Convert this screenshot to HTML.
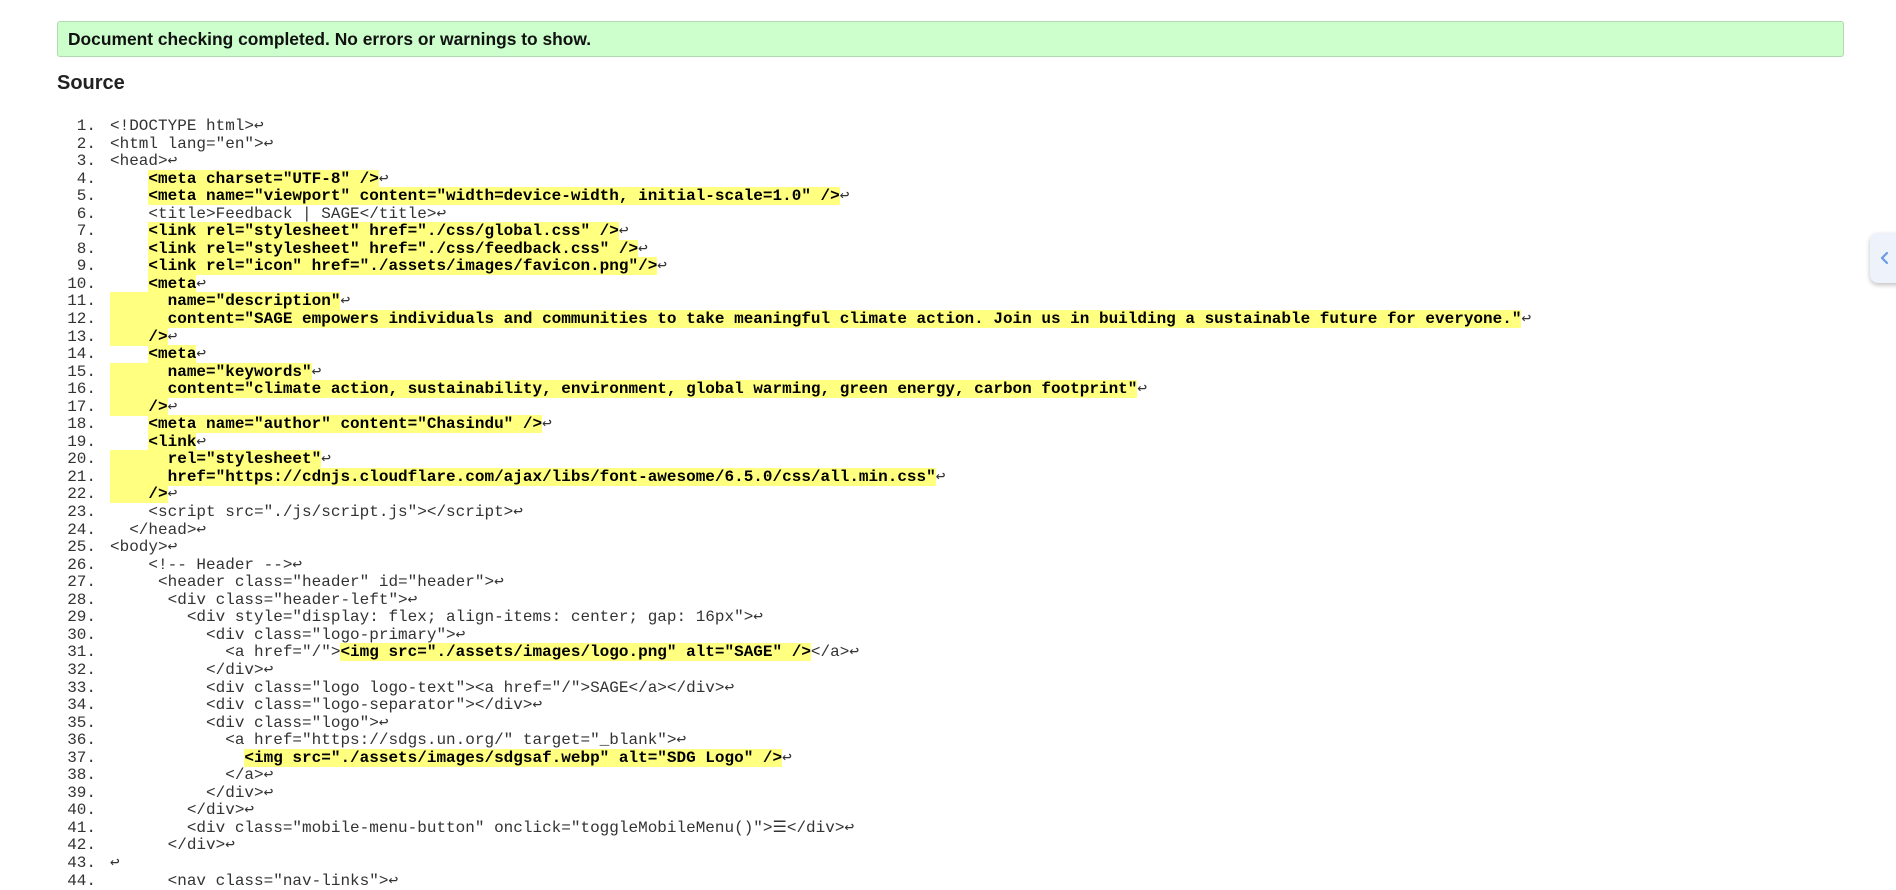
<!DOCTYPE html>
<html><head><meta charset="utf-8"><style>
body{margin:0;background:#fff;width:1896px;height:889px;overflow:hidden;position:relative;font-family:"Liberation Sans",Arial,sans-serif}
.ok{position:absolute;left:57px;top:21px;width:1787px;height:36px;background:#ccffcc;border:1px solid #b3d9b3;border-radius:3px;box-sizing:border-box}
.ok span{position:absolute;left:10px;top:7px;font-weight:bold;font-size:17.4px;color:#111}
h2{position:absolute;left:57px;top:72px;margin:0;font-size:20px;font-weight:bold;color:#222}
.code{position:absolute;left:0;top:118px;font-family:"Liberation Mono","DejaVu Sans Mono",monospace;font-size:16px;line-height:17.56px;color:#333}
.l{position:relative;height:17.56px;white-space:pre}
.n{position:absolute;width:60px;text-align:right;left:36px}
.c{position:absolute;left:110px}
b{font-weight:bold;color:#000;background:#ffff80}
.side{position:absolute;left:1870px;top:233px;width:40px;height:50px;border-radius:8px;background:#eef3fb;box-shadow:0 2px 5px rgba(0,0,0,.25)}
</style></head><body>
<div class="ok"><span>Document checking completed. No errors or warnings to show.</span></div>
<h2>Source</h2>
<div class="code">
<div class="l"><span class="n">1.</span><span class="c">&lt;!DOCTYPE html&gt;↩</span></div>
<div class="l"><span class="n">2.</span><span class="c">&lt;html lang="en"&gt;↩</span></div>
<div class="l"><span class="n">3.</span><span class="c">&lt;head&gt;↩</span></div>
<div class="l"><span class="n">4.</span><span class="c">    <b>&lt;meta charset="UTF-8" /&gt;</b>↩</span></div>
<div class="l"><span class="n">5.</span><span class="c">    <b>&lt;meta name="viewport" content="width=device-width, initial-scale=1.0" /&gt;</b>↩</span></div>
<div class="l"><span class="n">6.</span><span class="c">    &lt;title&gt;Feedback | SAGE&lt;/title&gt;↩</span></div>
<div class="l"><span class="n">7.</span><span class="c">    <b>&lt;link rel="stylesheet" href="./css/global.css" /&gt;</b>↩</span></div>
<div class="l"><span class="n">8.</span><span class="c">    <b>&lt;link rel="stylesheet" href="./css/feedback.css" /&gt;</b>↩</span></div>
<div class="l"><span class="n">9.</span><span class="c">    <b>&lt;link rel="icon" href="./assets/images/favicon.png"/&gt;</b>↩</span></div>
<div class="l"><span class="n">10.</span><span class="c">    <b>&lt;meta</b>↩</span></div>
<div class="l"><span class="n">11.</span><span class="c"><b>      name="description"</b>↩</span></div>
<div class="l"><span class="n">12.</span><span class="c"><b>      content="SAGE empowers individuals and communities to take meaningful climate action. Join us in building a sustainable future for everyone."</b>↩</span></div>
<div class="l"><span class="n">13.</span><span class="c"><b>    /&gt;</b>↩</span></div>
<div class="l"><span class="n">14.</span><span class="c">    <b>&lt;meta</b>↩</span></div>
<div class="l"><span class="n">15.</span><span class="c"><b>      name="keywords"</b>↩</span></div>
<div class="l"><span class="n">16.</span><span class="c"><b>      content="climate action, sustainability, environment, global warming, green energy, carbon footprint"</b>↩</span></div>
<div class="l"><span class="n">17.</span><span class="c"><b>    /&gt;</b>↩</span></div>
<div class="l"><span class="n">18.</span><span class="c">    <b>&lt;meta name="author" content="Chasindu" /&gt;</b>↩</span></div>
<div class="l"><span class="n">19.</span><span class="c">    <b>&lt;link</b>↩</span></div>
<div class="l"><span class="n">20.</span><span class="c"><b>      rel="stylesheet"</b>↩</span></div>
<div class="l"><span class="n">21.</span><span class="c"><b>      href="https://cdnjs.cloudflare.com/ajax/libs/font-awesome/6.5.0/css/all.min.css"</b>↩</span></div>
<div class="l"><span class="n">22.</span><span class="c"><b>    /&gt;</b>↩</span></div>
<div class="l"><span class="n">23.</span><span class="c">    &lt;script src="./js/script.js"&gt;&lt;/script&gt;↩</span></div>
<div class="l"><span class="n">24.</span><span class="c">  &lt;/head&gt;↩</span></div>
<div class="l"><span class="n">25.</span><span class="c">&lt;body&gt;↩</span></div>
<div class="l"><span class="n">26.</span><span class="c">    &lt;!-- Header --&gt;↩</span></div>
<div class="l"><span class="n">27.</span><span class="c">     &lt;header class="header" id="header"&gt;↩</span></div>
<div class="l"><span class="n">28.</span><span class="c">      &lt;div class="header-left"&gt;↩</span></div>
<div class="l"><span class="n">29.</span><span class="c">        &lt;div style="display: flex; align-items: center; gap: 16px"&gt;↩</span></div>
<div class="l"><span class="n">30.</span><span class="c">          &lt;div class="logo-primary"&gt;↩</span></div>
<div class="l"><span class="n">31.</span><span class="c">            &lt;a href="/"&gt;<b>&lt;img src="./assets/images/logo.png" alt="SAGE" /&gt;</b>&lt;/a&gt;↩</span></div>
<div class="l"><span class="n">32.</span><span class="c">          &lt;/div&gt;↩</span></div>
<div class="l"><span class="n">33.</span><span class="c">          &lt;div class="logo logo-text"&gt;&lt;a href="/"&gt;SAGE&lt;/a&gt;&lt;/div&gt;↩</span></div>
<div class="l"><span class="n">34.</span><span class="c">          &lt;div class="logo-separator"&gt;&lt;/div&gt;↩</span></div>
<div class="l"><span class="n">35.</span><span class="c">          &lt;div class="logo"&gt;↩</span></div>
<div class="l"><span class="n">36.</span><span class="c">            &lt;a href="https://sdgs.un.org/" target="_blank"&gt;↩</span></div>
<div class="l"><span class="n">37.</span><span class="c">              <b>&lt;img src="./assets/images/sdgsaf.webp" alt="SDG Logo" /&gt;</b>↩</span></div>
<div class="l"><span class="n">38.</span><span class="c">            &lt;/a&gt;↩</span></div>
<div class="l"><span class="n">39.</span><span class="c">          &lt;/div&gt;↩</span></div>
<div class="l"><span class="n">40.</span><span class="c">        &lt;/div&gt;↩</span></div>
<div class="l"><span class="n">41.</span><span class="c">        &lt;div class="mobile-menu-button" onclick="toggleMobileMenu()"&gt;☰&lt;/div&gt;↩</span></div>
<div class="l"><span class="n">42.</span><span class="c">      &lt;/div&gt;↩</span></div>
<div class="l"><span class="n">43.</span><span class="c">↩</span></div>
<div class="l"><span class="n">44.</span><span class="c">      &lt;nav class="nav-links"&gt;↩</span></div>
</div>
<div class="side"><svg width="26" height="50" viewBox="0 0 26 50"><path d="M17 20 L12 25 L17 30" fill="none" stroke="#6a9be6" stroke-width="2.2" stroke-linecap="round" stroke-linejoin="round"/></svg></div>
</body></html>
